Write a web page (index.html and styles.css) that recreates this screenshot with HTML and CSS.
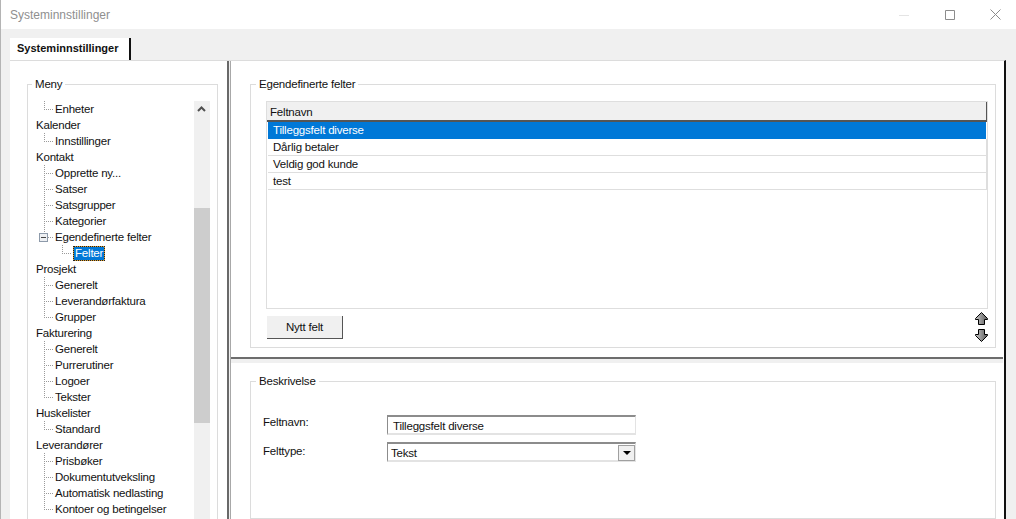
FILE: index.html
```html
<!DOCTYPE html>
<html lang="no">
<head>
    <meta charset="UTF-8">
    <meta name="viewport" content="width=device-width, initial-scale=1.0">
    <title>Systeminnstillinger</title>
    <link rel="stylesheet" href="styles.css">
</head>
<body>

<div class="window">
    <div class="titlebar">
        <span class="window-title">Systeminnstillinger</span>
        <div class="window-buttons">
            <svg class="min-icon" width="10" height="10" viewBox="0 0 10 10"><path d="M0 5.5H10" stroke="#e4e4e4" fill="none"/></svg>
            <svg class="max-icon" width="10" height="10" viewBox="0 0 10 10"><path d="M.5 .5H9.5V9.5H.5Z" stroke="#8c8c8c" fill="none"/></svg>
            <svg class="close-icon" width="11" height="11" viewBox="0 0 11 11"><path d="M.5 .5L10.5 10.5M10.5 .5L.5 10.5" stroke="#8c8c8c" fill="none"/></svg>
        </div>
    </div>

    <div class="tabstrip">
        <div class="tab">Systeminnstillinger</div>
    </div>

    <div class="tabpage">
        <div class="left-pane">
            <fieldset class="group menu-group">
                <legend>Meny</legend>
                <div class="tree-wrap">
                    <div class="tree">
                        <div class="node child last"><span class="conn"></span><span>Enheter</span></div>
                        <div class="node">Kalender</div>
                        <div class="node child last"><span class="conn"></span><span>Innstillinger</span></div>
                        <div class="node">Kontakt</div>
                        <div class="node child"><span class="conn"></span><span>Opprette ny...</span></div>
                        <div class="node child"><span class="conn"></span><span>Satser</span></div>
                        <div class="node child"><span class="conn"></span><span>Satsgrupper</span></div>
                        <div class="node child"><span class="conn"></span><span>Kategorier</span></div>
                        <div class="node child last"><span class="conn"><span class="expander"></span></span><span>Egendefinerte felter</span></div>
                        <div class="node subchild"><span class="conn"></span><span class="selected-node">Felter</span></div>
                        <div class="node">Prosjekt</div>
                        <div class="node child"><span class="conn"></span><span>Generelt</span></div>
                        <div class="node child"><span class="conn"></span><span>Leverandørfaktura</span></div>
                        <div class="node child last"><span class="conn"></span><span>Grupper</span></div>
                        <div class="node">Fakturering</div>
                        <div class="node child"><span class="conn"></span><span>Generelt</span></div>
                        <div class="node child"><span class="conn"></span><span>Purrerutiner</span></div>
                        <div class="node child"><span class="conn"></span><span>Logoer</span></div>
                        <div class="node child last"><span class="conn"></span><span>Tekster</span></div>
                        <div class="node">Huskelister</div>
                        <div class="node child last"><span class="conn"></span><span>Standard</span></div>
                        <div class="node">Leverandører</div>
                        <div class="node child"><span class="conn"></span><span>Prisbøker</span></div>
                        <div class="node child"><span class="conn"></span><span>Dokumentutveksling</span></div>
                        <div class="node child"><span class="conn"></span><span>Automatisk nedlasting</span></div>
                        <div class="node child last"><span class="conn"></span><span>Kontoer og betingelser</span></div>
                    </div>
                    <div class="scrollbar">
                        <svg class="scroll-up" width="9" height="6" viewBox="0 0 9 6"><path d="M1 5L4.5 1.5L8 5" stroke="#505050" stroke-width="2" fill="none"/></svg>
                        <div class="scroll-thumb"></div>
                    </div>
                </div>
            </fieldset>
        </div>

        <div class="v-splitter"></div>

        <div class="right-pane">
            <div class="top-part">
                <fieldset class="group fields-group">
                    <legend>Egendefinerte felter</legend>
                    <div class="listview">
                        <div class="list-header"><span class="list-header-cell">Feltnavn</span></div>
                        <div class="list-row selected-row">Tilleggsfelt diverse</div>
                        <div class="list-row">Dårlig betaler</div>
                        <div class="list-row">Veldig god kunde</div>
                        <div class="list-row">test</div>
                    </div>
                    <div class="list-actions">
                        <button class="btn" type="button">Nytt felt</button>
                        <div class="move-buttons">
                            <svg width="13" height="13" viewBox="0 0 13 13"><defs><linearGradient id="arrowFill"><stop offset="0" stop-color="#c8c8c8"/><stop offset="1" stop-color="#5a5a5a"/></linearGradient></defs><path d="M6.5 .5L12.5 6.5V7.5H9.5V12.5H3.5V7.5H.5V6.5Z" fill="url(#arrowFill)" stroke="#000"/></svg>
                            <svg width="13" height="13" viewBox="0 0 13 13"><path d="M6.5 12.5L12.5 6.5V5.5H9.5V.5H3.5V5.5H.5V6.5Z" fill="url(#arrowFill)" stroke="#000"/></svg>
                        </div>
                    </div>
                </fieldset>
            </div>

            <div class="h-splitter"></div>

            <fieldset class="group detail-group">
                <legend>Beskrivelse</legend>
                <div class="form-row name-row">
                    <label class="form-label">Feltnavn:</label>
                    <div class="sunken-field text-field">Tilleggsfelt diverse</div>
                </div>
                <div class="form-row type-row">
                    <label class="form-label">Felttype:</label>
                    <div class="sunken-field combo-field">
                        <span>Tekst</span>
                        <span class="combo-button"><svg width="8" height="4" viewBox="0 0 8 4"><path d="M0 0H8L4 4Z" fill="#000"/></svg></span>
                    </div>
                </div>
            </fieldset>
        </div>
    </div>
</div>

</body>
</html>
```

FILE: styles.css
```css
html, body {
    margin: 0;
    height: 519px;
    overflow: hidden;
}
body {
    font-family: "Liberation Sans", Arial, sans-serif;
    font-size: 11.5px;
    letter-spacing: -0.2px;
    color: #111;
    background-color: #f0f0f0;
}
.window {
    display: flex;
    flex-direction: column;
    height: 519px;
    overflow: hidden;
    border-left: 1px solid #b4b4b4;
    box-sizing: border-box;
}

/* title bar */
.titlebar {
    display: flex;
    justify-content: space-between;
    align-items: center;
    flex: 0 0 29px;
    background: white;
    padding-left: 9px;
}
.window-title {
    color: #8f8f8f;
    font-size: 12px;
    letter-spacing: 0;
}
.window-buttons {
    display: flex;
    align-items: center;
    padding-right: 15px;
}
.max-icon {
    margin-left: 36px;
    margin-right: 35px;
}

/* tabs */
.tabstrip {
    flex: 0 0 31px;
    padding-left: 9px;
    box-sizing: border-box;
    padding-top: 9px;
    background-color: #f0f0f0;
}
.tab {
    width: 121px;
    height: 22px;
    line-height: 21px;
    box-sizing: border-box;
    background: white;
    border-right: 2px solid #111;
    padding-left: 7px;
    font-weight: bold;
    font-size: 11px;
    letter-spacing: 0;
}
.tabpage {
    display: flex;
    flex: 1;
    min-height: 0;
    width: 996px;
    margin-left: 9px;
    background: white;
    border-top: 1px solid #dcdcdc;
    border-right: 2px solid #111;
    box-sizing: border-box;
}

/* group boxes */
.group {
    margin: 0;
    padding: 0;
    border: 1px solid #dcdcdc;
    min-width: 0;
}
.group legend {
    margin-left: 4px;
    padding: 0 3px;
    line-height: 16px;
}

/* left side */
.left-pane {
    flex: 0 0 217px;
    box-sizing: border-box;
    padding: 15px 0 0 17px;
}
.menu-group {
    width: 191px;
    box-sizing: border-box;
    height: 460px;
}
.tree-wrap {
    display: flex;
    margin-top: 9px;
}
.tree {
    width: 166px;
    flex: none;
}
.node {
    display: flex;
    align-items: center;
    height: 16px;
    padding-left: 8px;
    white-space: nowrap;
}
.node.child {
    padding-left: 16px;
}
.node.subchild {
    padding-left: 34px;
}
.conn {
    position: relative;
    display: block;
    flex: none;
    width: 9px;
    height: 16px;
    margin-right: 2px;
    align-self: flex-start;
    background-image:
        linear-gradient(#9a9a9a 50%, transparent 50%),
        linear-gradient(to right, #9a9a9a 50%, transparent 50%);
    background-size: 1px 2px, 2px 1px;
    background-position: 0 0, 0 8px;
    background-repeat: repeat-y, repeat-x;
}
.last .conn,
.subchild .conn {
    background-image:
        linear-gradient(to right, #9a9a9a 50%, transparent 50%);
    background-size: 2px 1px;
    background-position: 0 8px;
    background-repeat: repeat-x;
}
.last .conn::before,
.subchild .conn::before {
    content: "";
    position: absolute;
    left: 0;
    top: 0;
    width: 1px;
    height: 8px;
    background: repeating-linear-gradient(#9a9a9a 0 1px, transparent 1px 2px);
}
.expander {
    position: absolute;
    left: -5px;
    top: 4px;
    width: 9px;
    height: 9px;
    box-sizing: border-box;
    border: 1px solid #8d9aaa;
    background: linear-gradient(to bottom, transparent 3px, #444 3px, #444 4px, transparent 4px) 1px 0 / 5px 100% no-repeat, #eef0f3;
}
.selected-node {
    background-color: #0078d7;
    color: white;
    border: 1px solid #e0a030;
    outline: 1px dotted #222;
    outline-offset: -1px;
    padding: 0 1px;
    line-height: 13px;
}
.scrollbar {
    position: relative;
    width: 16px;
    height: 418px;
    flex: none;
    background-color: #f0f0f0;
}
.scroll-up {
    position: absolute;
    left: 3px;
    top: 5px;
}
.scroll-thumb {
    position: relative;
    top: 107px;
    height: 215px;
    background-color: #cdcdcd;
}

/* splitters */
.v-splitter {
    flex: 0 0 4px;
    box-sizing: border-box;
    border-left: 2px solid #696969;
    border-right: 1px solid #a8a8a8;
    background-color: #f0f0f0;
}
.right-pane {
    flex: 1;
    min-width: 0;
    display: flex;
    flex-direction: column;
}
.top-part {
    flex: 0 0 296px;
    box-sizing: border-box;
    padding: 15px 8px 0 19px;
}
.h-splitter {
    flex: 0 0 6px;
    box-sizing: border-box;
    border-top: 2px solid #6d6d6d;
    background-color: #f0f0f0;
    margin-right: 1px;
}

/* custom field list */
.fields-group {
    height: 272px;
    box-sizing: border-box;
    padding: 0 7px 0 15px;
}
.fields-group legend {
    margin-left: -10px;
}
.listview {
    height: 208px;
    margin-top: 9px;
    box-sizing: border-box;
    border: 1px solid #dedede;
}
.list-header {
    height: 20px;
    box-sizing: border-box;
    background-color: #f0f0f0;
    border-bottom: 2px solid #555;
    border-right: 1px solid #555;
}
.list-header-cell {
    padding-left: 3px;
    line-height: 20px;
}
.list-row {
    height: 17px;
    line-height: 16px;
    margin-left: 1px;
    padding-left: 5px;
    box-sizing: border-box;
    border-bottom: 1px solid #dedede;
    border-right: 1px solid #dedede;
}
.selected-row {
    margin-right: 1px;
    background-color: #0078d7;
    color: white;
    border-color: #0078d7;
}
.list-actions {
    display: flex;
    justify-content: space-between;
    align-items: center;
    height: 30px;
    margin-top: 3px;
}
.btn {
    width: 76px;
    height: 23px;
    margin-left: 1px;
    padding: 0;
    font: inherit;
    letter-spacing: inherit;
    color: inherit;
    background-color: #f0f0f0;
    border: 0;
    border-right: 1px solid #555;
    border-bottom: 1px solid #555;
}
.move-buttons {
    display: flex;
    flex-direction: column;
    gap: 4px;
}
.move-buttons svg {
    display: block;
}

/* description form */
.detail-group {
    margin: 10px 8px 0 19px;
    padding: 0 0 0 12px;
    height: 190px;
    box-sizing: border-box;
}
.detail-group legend {
    margin-left: -7px;
}
.form-row {
    display: flex;
    align-items: flex-start;
}
.name-row {
    margin-top: 26px;
}
.type-row {
    margin-top: 7px;
}
.type-row .form-label {
    padding-top: 2px;
}
.form-label {
    width: 124px;
    flex: none;
    line-height: 14px;
}
.sunken-field {
    width: 249px;
    height: 20px;
    line-height: 19px;
    box-sizing: border-box;
    border-top: 2px solid #8c8c8c;
    border-left: 1px solid #8c8c8c;
    border-right: 1px solid #e3e3e3;
    border-bottom: 2px solid #e3e3e3;
}
.text-field {
    padding-left: 5px;
}
.combo-field {
    display: flex;
    justify-content: space-between;
    padding-left: 3px;
}
.combo-button {
    display: flex;
    align-items: center;
    justify-content: center;
    width: 17px;
    height: 16px;
    box-sizing: border-box;
    margin-top: 1px;
    background-color: #f0f0f0;
    border: 1px solid #a0a0a0;
}
```
